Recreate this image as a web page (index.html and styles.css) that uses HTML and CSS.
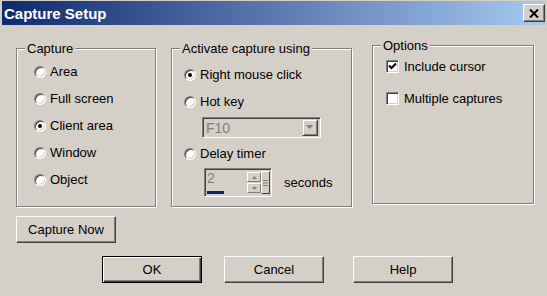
FILE: index.html
```html
<!DOCTYPE html>
<html lang="en">
<head>
    <meta charset="UTF-8">
    <meta name="viewport" content="width=device-width, initial-scale=1.0">
    <title>Capture Setup</title>
    <link rel="stylesheet" href="styles.css">
</head>
<body>

    <div class="window">
        <div class="titlebar">
            <span class="title">Capture Setup</span>
            <span class="close-btn">
                <svg width="10" height="9" viewBox="0 0 10 9">
                    <path d="M1 0.5 L9 8.5 M9 0.5 L1 8.5" stroke="#000" stroke-width="2"/>
                </svg>
            </span>
        </div>

        <div class="content">
            <div class="groups">
                <fieldset class="group group-capture">
                    <legend>Capture</legend>
                    <div class="choices">
                        <div class="choice"><span class="radio"></span>Area</div>
                        <div class="choice"><span class="radio"></span>Full screen</div>
                        <div class="choice"><span class="radio checked"></span>Client area</div>
                        <div class="choice"><span class="radio"></span>Window</div>
                        <div class="choice"><span class="radio"></span>Object</div>
                    </div>
                </fieldset>

                <fieldset class="group group-activate">
                    <legend>Activate capture using</legend>
                    <div class="choices">
                        <div class="choice"><span class="radio checked"></span>Right mouse click</div>
                        <div class="choice"><span class="radio"></span>Hot key</div>
                        <div class="combo">
                            <span class="combo-text">F10</span>
                            <span class="combo-arrow">
                                <svg width="8" height="5" viewBox="0 0 8 5"><path d="M0 0 H7 L3.5 4 Z" fill="#808080"/></svg>
                            </span>
                        </div>
                        <div class="choice"><span class="radio"></span>Delay timer</div>
                        <div class="timer-row">
                            <div class="spinner">
                                <div class="spin-field">
                                    <span class="spin-text">2</span>
                                    <span class="spin-bar"></span>
                                </div>
                                <div class="spin-buttons">
                                    <span class="mini-btn">
                                        <svg width="5" height="3" viewBox="0 0 5 3"><path d="M0 3 H5 L2.5 0 Z" fill="#808080"/></svg>
                                    </span>
                                    <span class="mini-btn">
                                        <svg width="5" height="3" viewBox="0 0 5 3"><path d="M0 0 H5 L2.5 3 Z" fill="#808080"/></svg>
                                    </span>
                                </div>
                                <div class="spin-extra">
                                    <svg width="5" height="6" viewBox="0 0 5 6"><path d="M0 0.5 H5 M0 3 H5 M0 5.5 H5" stroke="#808080"/></svg>
                                </div>
                            </div>
                            <span class="seconds">seconds</span>
                        </div>
                    </div>
                </fieldset>

                <fieldset class="group group-options">
                    <legend>Options</legend>
                    <div class="choices">
                        <div class="choice">
                            <span class="checkbox">
                                <svg width="9" height="9" viewBox="0 0 9 9"><path d="M1 3.5 L3.5 6 L8 1.5" stroke="#000" stroke-width="2" fill="none"/></svg>
                            </span>Include cursor
                        </div>
                        <div class="choice"><span class="checkbox"></span>Multiple captures</div>
                    </div>
                </fieldset>
            </div>

            <button class="btn btn-capture">Capture Now</button>

            <div class="dialog-buttons">
                <button class="btn btn-default">OK</button>
                <button class="btn btn-cancel">Cancel</button>
                <button class="btn btn-help">Help</button>
            </div>
        </div>
    </div>

</body>
</html>
```

FILE: styles.css
```css
body {
    margin: 0;
    background-color: #d4d0c8;
    font-family: "Liberation Sans", Arial, sans-serif;
    font-size: 13px;
    color: #000;
}

.window {
    width: 547px;
    height: 296px;
    overflow: hidden;
}

/* Title bar */
.titlebar {
    height: 24px;
    margin: 1px 1px 0 2px;
    padding: 0 1px 0 2px;
    display: flex;
    align-items: center;
    justify-content: space-between;
    background: linear-gradient(to right, #0f2a6e, #a6caf0);
}

.title {
    color: #fff;
    font-weight: bold;
    font-size: 15px;
}

.close-btn {
    box-sizing: border-box;
    width: 22px;
    height: 18px;
    display: flex;
    align-items: center;
    justify-content: center;
    background-color: #d4d0c8;
    border: 1px solid;
    border-color: #fff #404040 #404040 #fff;
    box-shadow: inset -1px -1px 0 #808080;
}

.content {
    padding: 16px 0 0 16px;
}

/* Group boxes */
.groups {
    display: flex;
    align-items: flex-start;
}

.group {
    box-sizing: border-box;
    height: 166px;
    margin: 0;
    padding: 0;
    border: 1px solid #808080;
    box-shadow: inset 1px 1px 0 #fff, 1px 1px 0 #fff;
}

.group legend {
    margin-left: 8px;
    padding: 0 2px;
    line-height: 15px;
    background-color: #d4d0c8;
}

.group-capture {
    width: 140px;
}

.group-capture .choices {
    padding: 2px 0 0 17px;
}

.group-activate {
    width: 181px;
    margin-left: 15px;
}

.group-activate .choices {
    padding: 5px 0 0 12px;
}

.group-options {
    width: 162px;
    margin-left: 20px;
    margin-top: -3px;
}

.group-options .choices {
    padding: 0 0 0 13px;
    gap: 5px;
}

.choices {
    display: flex;
    flex-direction: column;
}

.choice {
    height: 27px;
    display: flex;
    align-items: center;
    white-space: nowrap;
}

/* Radio buttons */
.radio {
    box-sizing: border-box;
    width: 12px;
    height: 12px;
    margin-right: 4px;
    border-radius: 50%;
    background-color: #fff;
    border: 1px solid;
    border-color: #808080 #fff #fff #808080;
    box-shadow: inset 1px 1px 0 #404040, inset -1px -1px 0 #d4d0c8;
    display: flex;
    align-items: center;
    justify-content: center;
}

.radio.checked::after {
    content: "";
    width: 4px;
    height: 4px;
    border-radius: 50%;
    background-color: #000;
}

/* Check boxes */
.checkbox {
    box-sizing: border-box;
    width: 13px;
    height: 13px;
    margin-right: 5px;
    background-color: #fff;
    border: 1px solid;
    border-color: #808080 #fff #fff #808080;
    box-shadow: inset 1px 1px 0 #404040, inset -1px -1px 0 #d4d0c8;
    display: flex;
    align-items: center;
    justify-content: center;
}

/* Disabled combo box */
.combo {
    box-sizing: border-box;
    width: 119px;
    height: 21px;
    margin: 2px 0 2px 18px;
    display: flex;
    align-items: center;
    justify-content: space-between;
    border: 1px solid;
    border-color: #808080 #fff #fff #808080;
    box-shadow: inset 1px 1px 0 #404040, inset -1px -1px 0 #d4d0c8;
    padding: 2px 2px 2px 3px;
}

.combo-text {
    color: #808080;
    font-size: 14px;
}

.combo-arrow {
    box-sizing: border-box;
    width: 16px;
    height: 17px;
    display: flex;
    align-items: center;
    justify-content: center;
    border: 1px solid;
    border-color: #d4d0c8 #404040 #404040 #d4d0c8;
    box-shadow: inset 1px 1px 0 #fff, inset -1px -1px 0 #808080;
}

/* Delay timer spinner */
.timer-row {
    display: flex;
    align-items: center;
    margin: 1px 0 0 20px;
}

.spinner {
    box-sizing: border-box;
    width: 68px;
    height: 29px;
    display: flex;
    border: 1px solid;
    border-color: #808080 #fff #fff #808080;
    box-shadow: inset 1px 1px 0 #404040, inset -1px -1px 0 #d4d0c8;
    padding: 2px 1px 2px 2px;
}

.spin-field {
    flex: 1;
    display: flex;
    flex-direction: column;
    justify-content: space-between;
}

.spin-text {
    color: #808080;
    font-size: 14px;
    line-height: 14px;
}

.spin-bar {
    width: 17px;
    height: 3px;
    background-color: #0a246a;
}

.spin-buttons {
    display: flex;
    flex-direction: column;
    justify-content: center;
    gap: 1px;
}

.mini-btn {
    box-sizing: border-box;
    width: 14px;
    height: 10px;
    display: flex;
    align-items: center;
    justify-content: center;
    border: 1px solid;
    border-color: #fff #808080 #808080 #fff;
}

.spin-extra {
    box-sizing: border-box;
    width: 9px;
    display: flex;
    align-items: center;
    justify-content: center;
    border: 1px solid;
    border-color: #fff #404040 #404040 #fff;
}

.seconds {
    margin-left: 12px;
}

/* Push buttons */
.btn {
    box-sizing: border-box;
    width: 100px;
    height: 27px;
    padding: 0;
    font-family: "Liberation Sans", Arial, sans-serif;
    font-size: 13px;
    color: #000;
    background-color: #d4d0c8;
    border: 1px solid;
    border-color: #fff #404040 #404040 #fff;
    box-shadow: inset -1px -1px 0 #808080;
}

.btn-capture {
    display: block;
    margin-top: 9px;
}

.dialog-buttons {
    display: flex;
    margin: 13px 0 0 86px;
}

.btn-default {
    border-color: #000;
    box-shadow: inset 1px 1px 0 #fff, inset -1px -1px 0 #404040, inset -2px -2px 0 #808080;
}

.btn-cancel {
    margin-left: 22px;
}

.btn-help {
    margin-left: 29px;
}
```
